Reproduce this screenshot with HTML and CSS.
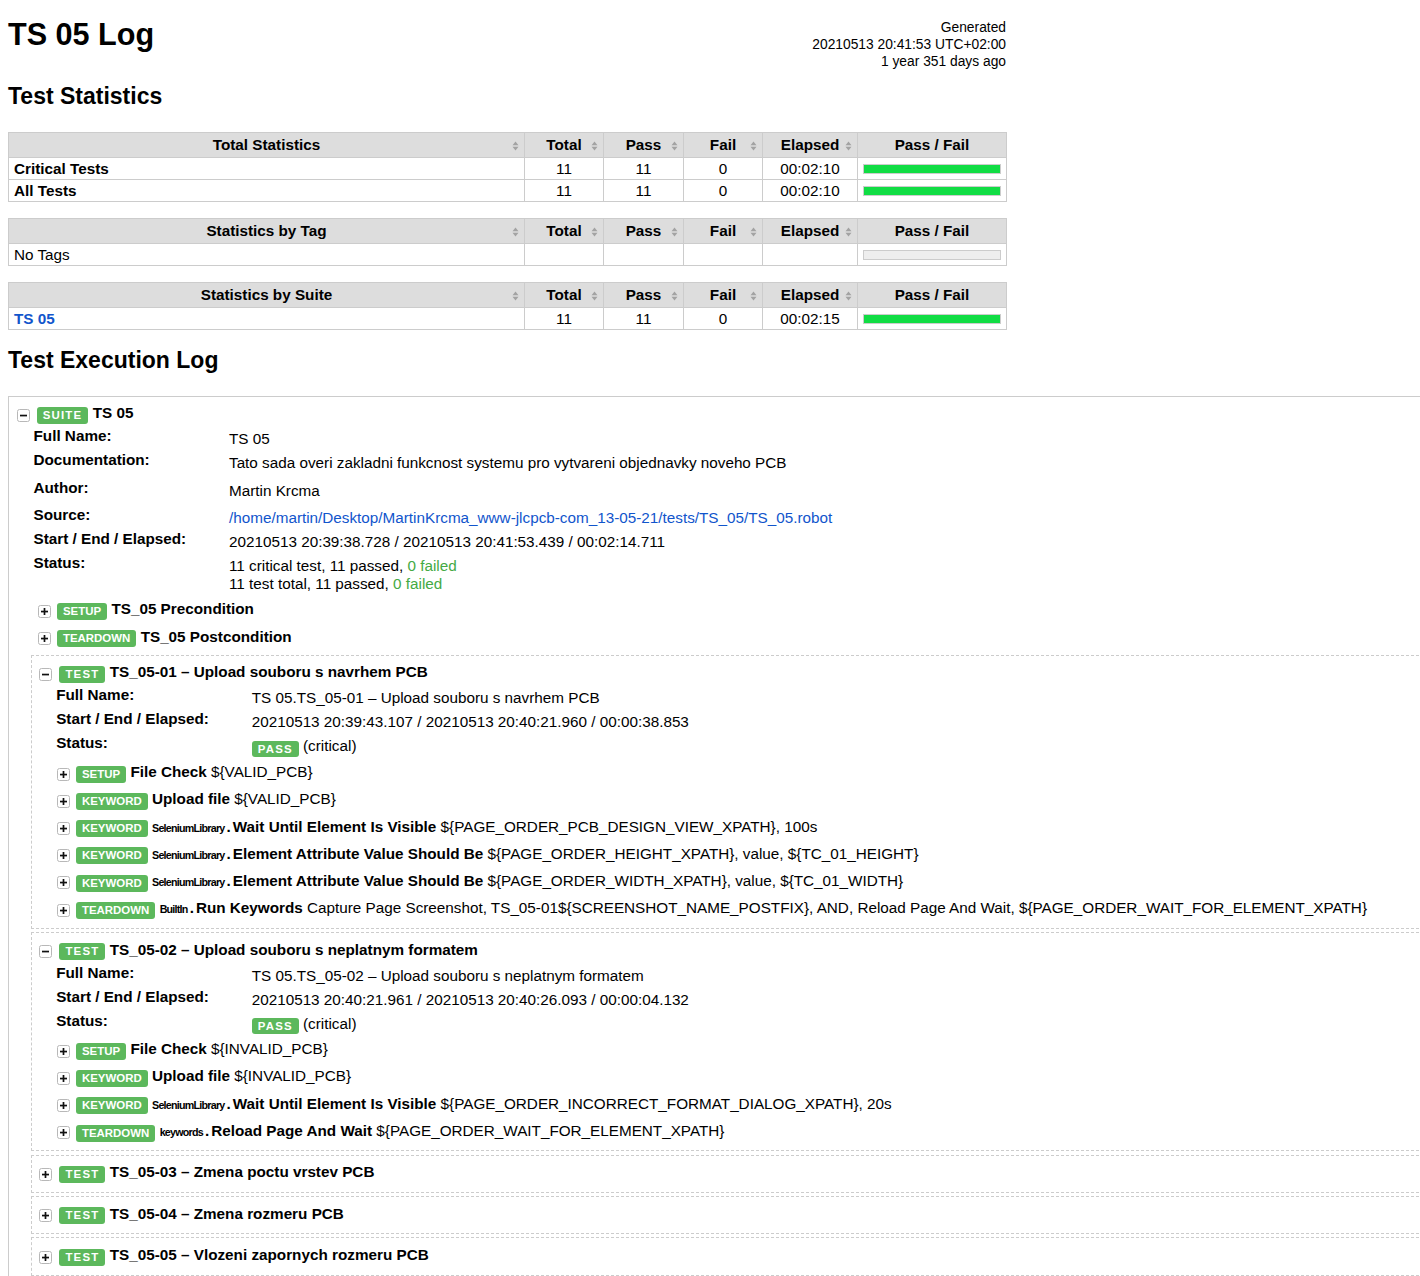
FILE: index.html
```html
<!DOCTYPE html>
<html lang="en">
<head>
<meta charset="utf-8">
<title>TS 05 Log</title>
<link rel="stylesheet" href="styles.css">
</head>
<body>
<header class="top">
  <h1>TS 05 Log</h1>
  <div class="generated">Generated<br>20210513 20:41:53 UTC+02:00<br>1 year 351 days ago</div>
</header>

<h2 class="h-stats">Test Statistics</h2>

<table class="stats">
  <colgroup><col class="c-name"><col class="c-tot"><col class="c-pass"><col class="c-fail"><col class="c-el"><col class="c-bar"></colgroup>
  <thead>
    <tr>
      <th>Total Statistics<span class="sort"><svg width="7" height="10" viewBox="0 0 7 10"><path d="M0.5 4.2L3.5 0.6L6.5 4.2Z M0.5 5.8L3.5 9.4L6.5 5.8Z" fill="#a3a3a3"/></svg></span></th>
      <th>Total<span class="sort"><svg width="7" height="10" viewBox="0 0 7 10"><path d="M0.5 4.2L3.5 0.6L6.5 4.2Z M0.5 5.8L3.5 9.4L6.5 5.8Z" fill="#a3a3a3"/></svg></span></th>
      <th>Pass<span class="sort"><svg width="7" height="10" viewBox="0 0 7 10"><path d="M0.5 4.2L3.5 0.6L6.5 4.2Z M0.5 5.8L3.5 9.4L6.5 5.8Z" fill="#a3a3a3"/></svg></span></th>
      <th>Fail<span class="sort"><svg width="7" height="10" viewBox="0 0 7 10"><path d="M0.5 4.2L3.5 0.6L6.5 4.2Z M0.5 5.8L3.5 9.4L6.5 5.8Z" fill="#a3a3a3"/></svg></span></th>
      <th>Elapsed<span class="sort"><svg width="7" height="10" viewBox="0 0 7 10"><path d="M0.5 4.2L3.5 0.6L6.5 4.2Z M0.5 5.8L3.5 9.4L6.5 5.8Z" fill="#a3a3a3"/></svg></span></th>
      <th>Pass / Fail</th>
    </tr>
  </thead>
  <tbody>
    <tr><td class="nm"><b>Critical Tests</b></td><td>11</td><td>11</td><td>0</td><td>00:02:10</td><td class="barcell"><div class="bar pass"></div></td></tr>
    <tr><td class="nm"><b>All Tests</b></td><td>11</td><td>11</td><td>0</td><td>00:02:10</td><td class="barcell"><div class="bar pass"></div></td></tr>
  </tbody>
</table>

<table class="stats">
  <colgroup><col class="c-name"><col class="c-tot"><col class="c-pass"><col class="c-fail"><col class="c-el"><col class="c-bar"></colgroup>
  <thead>
    <tr>
      <th>Statistics by Tag<span class="sort"><svg width="7" height="10" viewBox="0 0 7 10"><path d="M0.5 4.2L3.5 0.6L6.5 4.2Z M0.5 5.8L3.5 9.4L6.5 5.8Z" fill="#a3a3a3"/></svg></span></th>
      <th>Total<span class="sort"><svg width="7" height="10" viewBox="0 0 7 10"><path d="M0.5 4.2L3.5 0.6L6.5 4.2Z M0.5 5.8L3.5 9.4L6.5 5.8Z" fill="#a3a3a3"/></svg></span></th>
      <th>Pass<span class="sort"><svg width="7" height="10" viewBox="0 0 7 10"><path d="M0.5 4.2L3.5 0.6L6.5 4.2Z M0.5 5.8L3.5 9.4L6.5 5.8Z" fill="#a3a3a3"/></svg></span></th>
      <th>Fail<span class="sort"><svg width="7" height="10" viewBox="0 0 7 10"><path d="M0.5 4.2L3.5 0.6L6.5 4.2Z M0.5 5.8L3.5 9.4L6.5 5.8Z" fill="#a3a3a3"/></svg></span></th>
      <th>Elapsed<span class="sort"><svg width="7" height="10" viewBox="0 0 7 10"><path d="M0.5 4.2L3.5 0.6L6.5 4.2Z M0.5 5.8L3.5 9.4L6.5 5.8Z" fill="#a3a3a3"/></svg></span></th>
      <th>Pass / Fail</th>
    </tr>
  </thead>
  <tbody>
    <tr><td class="nm">No Tags</td><td></td><td></td><td></td><td></td><td class="barcell"><div class="bar empty"></div></td></tr>
  </tbody>
</table>

<table class="stats">
  <colgroup><col class="c-name"><col class="c-tot"><col class="c-pass"><col class="c-fail"><col class="c-el"><col class="c-bar"></colgroup>
  <thead>
    <tr>
      <th>Statistics by Suite<span class="sort"><svg width="7" height="10" viewBox="0 0 7 10"><path d="M0.5 4.2L3.5 0.6L6.5 4.2Z M0.5 5.8L3.5 9.4L6.5 5.8Z" fill="#a3a3a3"/></svg></span></th>
      <th>Total<span class="sort"><svg width="7" height="10" viewBox="0 0 7 10"><path d="M0.5 4.2L3.5 0.6L6.5 4.2Z M0.5 5.8L3.5 9.4L6.5 5.8Z" fill="#a3a3a3"/></svg></span></th>
      <th>Pass<span class="sort"><svg width="7" height="10" viewBox="0 0 7 10"><path d="M0.5 4.2L3.5 0.6L6.5 4.2Z M0.5 5.8L3.5 9.4L6.5 5.8Z" fill="#a3a3a3"/></svg></span></th>
      <th>Fail<span class="sort"><svg width="7" height="10" viewBox="0 0 7 10"><path d="M0.5 4.2L3.5 0.6L6.5 4.2Z M0.5 5.8L3.5 9.4L6.5 5.8Z" fill="#a3a3a3"/></svg></span></th>
      <th>Elapsed<span class="sort"><svg width="7" height="10" viewBox="0 0 7 10"><path d="M0.5 4.2L3.5 0.6L6.5 4.2Z M0.5 5.8L3.5 9.4L6.5 5.8Z" fill="#a3a3a3"/></svg></span></th>
      <th>Pass / Fail</th>
    </tr>
  </thead>
  <tbody>
    <tr><td class="nm"><a class="link strong" href="#s1">TS 05</a></td><td>11</td><td>11</td><td>0</td><td>00:02:15</td><td class="barcell"><div class="bar pass"></div></td></tr>
  </tbody>
</table>

<h2 class="h-log">Test Execution Log</h2>

<div class="suite" id="s1">
  <div class="ehead">
    <span class="tog"><svg width="13" height="13" viewBox="0 0 13 13"><rect x=".5" y=".5" width="12" height="12" rx="2" fill="#fff" stroke="#b8b8b8"/><rect x="3" y="5.7" width="7" height="1.7" fill="#111"/></svg></span><span class="label sp">SUITE</span><span class="ename">TS 05</span>
  </div>
  <table class="meta">
    <tr><th>Full Name:</th><td>TS 05</td></tr>
    <tr class="doc"><th>Documentation:</th><td>Tato sada overi zakladni funkcnost systemu pro vytvareni objednavky noveho PCB</td></tr>
    <tr class="doc"><th>Author:</th><td>Martin Krcma</td></tr>
    <tr><th>Source:</th><td><a class="link" href="#src">/home/martin/Desktop/MartinKrcma_www-jlcpcb-com_13-05-21/tests/TS_05/TS_05.robot</a></td></tr>
    <tr><th>Start / End / Elapsed:</th><td>20210513 20:39:38.728 / 20210513 20:41:53.439 / 00:02:14.711</td></tr>
    <tr class="last"><th>Status:</th><td>11 critical test, 11 passed, <span class="ok">0 failed</span><br>11 test total, 11 passed, <span class="ok">0 failed</span></td></tr>
  </table>

  <div class="children">
    <div class="kw">
      <div class="ehead"><span class="tog"><svg width="13" height="13" viewBox="0 0 13 13"><rect x=".5" y=".5" width="12" height="12" rx="2" fill="#fff" stroke="#b8b8b8"/><rect x="3" y="5.7" width="7" height="1.7" fill="#111"/><rect x="5.65" y="3" width="1.7" height="7" fill="#111"/></svg></span><span class="label">SETUP</span><span class="ename">TS_05 Precondition</span></div>
    </div>
    <div class="kw">
      <div class="ehead"><span class="tog"><svg width="13" height="13" viewBox="0 0 13 13"><rect x=".5" y=".5" width="12" height="12" rx="2" fill="#fff" stroke="#b8b8b8"/><rect x="3" y="5.7" width="7" height="1.7" fill="#111"/><rect x="5.65" y="3" width="1.7" height="7" fill="#111"/></svg></span><span class="label">TEARDOWN</span><span class="ename">TS_05 Postcondition</span></div>
    </div>

    <div class="test">
      <div class="ehead"><span class="tog"><svg width="13" height="13" viewBox="0 0 13 13"><rect x=".5" y=".5" width="12" height="12" rx="2" fill="#fff" stroke="#b8b8b8"/><rect x="3" y="5.7" width="7" height="1.7" fill="#111"/></svg></span><span class="label sp">TEST</span><span class="ename">TS_05-01 – Upload souboru s navrhem PCB</span></div>
      <table class="meta">
        <tr><th>Full Name:</th><td>TS 05.TS_05-01 – Upload souboru s navrhem PCB</td></tr>
        <tr><th>Start / End / Elapsed:</th><td>20210513 20:39:43.107 / 20210513 20:40:21.960 / 00:00:38.853</td></tr>
        <tr class="last"><th>Status:</th><td><span class="label sp inl">PASS</span> (critical)</td></tr>
      </table>
      <div class="tchildren">
        <div class="kw"><div class="ehead"><span class="tog"><svg width="13" height="13" viewBox="0 0 13 13"><rect x=".5" y=".5" width="12" height="12" rx="2" fill="#fff" stroke="#b8b8b8"/><rect x="3" y="5.7" width="7" height="1.7" fill="#111"/><rect x="5.65" y="3" width="1.7" height="7" fill="#111"/></svg></span><span class="label">SETUP</span><span class="ename">File Check <span class="arg">${VALID_PCB}</span></span></div></div>
        <div class="kw"><div class="ehead"><span class="tog"><svg width="13" height="13" viewBox="0 0 13 13"><rect x=".5" y=".5" width="12" height="12" rx="2" fill="#fff" stroke="#b8b8b8"/><rect x="3" y="5.7" width="7" height="1.7" fill="#111"/><rect x="5.65" y="3" width="1.7" height="7" fill="#111"/></svg></span><span class="label">KEYWORD</span><span class="ename">Upload file <span class="arg">${VALID_PCB}</span></span></div></div>
        <div class="kw"><div class="ehead"><span class="tog"><svg width="13" height="13" viewBox="0 0 13 13"><rect x=".5" y=".5" width="12" height="12" rx="2" fill="#fff" stroke="#b8b8b8"/><rect x="3" y="5.7" width="7" height="1.7" fill="#111"/><rect x="5.65" y="3" width="1.7" height="7" fill="#111"/></svg></span><span class="label">KEYWORD</span><span class="ename"><span class="parent">SeleniumLibrary</span><span class="dot">.</span>Wait Until Element Is Visible <span class="arg">${PAGE_ORDER_PCB_DESIGN_VIEW_XPATH}, 100s</span></span></div></div>
        <div class="kw"><div class="ehead"><span class="tog"><svg width="13" height="13" viewBox="0 0 13 13"><rect x=".5" y=".5" width="12" height="12" rx="2" fill="#fff" stroke="#b8b8b8"/><rect x="3" y="5.7" width="7" height="1.7" fill="#111"/><rect x="5.65" y="3" width="1.7" height="7" fill="#111"/></svg></span><span class="label">KEYWORD</span><span class="ename"><span class="parent">SeleniumLibrary</span><span class="dot">.</span>Element Attribute Value Should Be <span class="arg">${PAGE_ORDER_HEIGHT_XPATH}, value, ${TC_01_HEIGHT}</span></span></div></div>
        <div class="kw"><div class="ehead"><span class="tog"><svg width="13" height="13" viewBox="0 0 13 13"><rect x=".5" y=".5" width="12" height="12" rx="2" fill="#fff" stroke="#b8b8b8"/><rect x="3" y="5.7" width="7" height="1.7" fill="#111"/><rect x="5.65" y="3" width="1.7" height="7" fill="#111"/></svg></span><span class="label">KEYWORD</span><span class="ename"><span class="parent">SeleniumLibrary</span><span class="dot">.</span>Element Attribute Value Should Be <span class="arg">${PAGE_ORDER_WIDTH_XPATH}, value, ${TC_01_WIDTH}</span></span></div></div>
        <div class="kw"><div class="ehead"><span class="tog"><svg width="13" height="13" viewBox="0 0 13 13"><rect x=".5" y=".5" width="12" height="12" rx="2" fill="#fff" stroke="#b8b8b8"/><rect x="3" y="5.7" width="7" height="1.7" fill="#111"/><rect x="5.65" y="3" width="1.7" height="7" fill="#111"/></svg></span><span class="label">TEARDOWN</span><span class="ename"><span class="parent">BuiltIn</span><span class="dot">.</span>Run Keywords <span class="arg">Capture Page Screenshot, TS_05-01${SCREENSHOT_NAME_POSTFIX}, AND, Reload Page And Wait, ${PAGE_ORDER_WAIT_FOR_ELEMENT_XPATH}</span></span></div></div>
      </div>
    </div>

    <div class="test">
      <div class="ehead"><span class="tog"><svg width="13" height="13" viewBox="0 0 13 13"><rect x=".5" y=".5" width="12" height="12" rx="2" fill="#fff" stroke="#b8b8b8"/><rect x="3" y="5.7" width="7" height="1.7" fill="#111"/></svg></span><span class="label sp">TEST</span><span class="ename">TS_05-02 – Upload souboru s neplatnym formatem</span></div>
      <table class="meta">
        <tr><th>Full Name:</th><td>TS 05.TS_05-02 – Upload souboru s neplatnym formatem</td></tr>
        <tr><th>Start / End / Elapsed:</th><td>20210513 20:40:21.961 / 20210513 20:40:26.093 / 00:00:04.132</td></tr>
        <tr class="last"><th>Status:</th><td><span class="label sp inl">PASS</span> (critical)</td></tr>
      </table>
      <div class="tchildren">
        <div class="kw"><div class="ehead"><span class="tog"><svg width="13" height="13" viewBox="0 0 13 13"><rect x=".5" y=".5" width="12" height="12" rx="2" fill="#fff" stroke="#b8b8b8"/><rect x="3" y="5.7" width="7" height="1.7" fill="#111"/><rect x="5.65" y="3" width="1.7" height="7" fill="#111"/></svg></span><span class="label">SETUP</span><span class="ename">File Check <span class="arg">${INVALID_PCB}</span></span></div></div>
        <div class="kw"><div class="ehead"><span class="tog"><svg width="13" height="13" viewBox="0 0 13 13"><rect x=".5" y=".5" width="12" height="12" rx="2" fill="#fff" stroke="#b8b8b8"/><rect x="3" y="5.7" width="7" height="1.7" fill="#111"/><rect x="5.65" y="3" width="1.7" height="7" fill="#111"/></svg></span><span class="label">KEYWORD</span><span class="ename">Upload file <span class="arg">${INVALID_PCB}</span></span></div></div>
        <div class="kw"><div class="ehead"><span class="tog"><svg width="13" height="13" viewBox="0 0 13 13"><rect x=".5" y=".5" width="12" height="12" rx="2" fill="#fff" stroke="#b8b8b8"/><rect x="3" y="5.7" width="7" height="1.7" fill="#111"/><rect x="5.65" y="3" width="1.7" height="7" fill="#111"/></svg></span><span class="label">KEYWORD</span><span class="ename"><span class="parent">SeleniumLibrary</span><span class="dot">.</span>Wait Until Element Is Visible <span class="arg">${PAGE_ORDER_INCORRECT_FORMAT_DIALOG_XPATH}, 20s</span></span></div></div>
        <div class="kw"><div class="ehead"><span class="tog"><svg width="13" height="13" viewBox="0 0 13 13"><rect x=".5" y=".5" width="12" height="12" rx="2" fill="#fff" stroke="#b8b8b8"/><rect x="3" y="5.7" width="7" height="1.7" fill="#111"/><rect x="5.65" y="3" width="1.7" height="7" fill="#111"/></svg></span><span class="label">TEARDOWN</span><span class="ename"><span class="parent">keywords</span><span class="dot">.</span>Reload Page And Wait <span class="arg">${PAGE_ORDER_WAIT_FOR_ELEMENT_XPATH}</span></span></div></div>
      </div>
    </div>

    <div class="test">
      <div class="ehead"><span class="tog"><svg width="13" height="13" viewBox="0 0 13 13"><rect x=".5" y=".5" width="12" height="12" rx="2" fill="#fff" stroke="#b8b8b8"/><rect x="3" y="5.7" width="7" height="1.7" fill="#111"/><rect x="5.65" y="3" width="1.7" height="7" fill="#111"/></svg></span><span class="label sp">TEST</span><span class="ename">TS_05-03 – Zmena poctu vrstev PCB</span></div>
    </div>
    <div class="test">
      <div class="ehead"><span class="tog"><svg width="13" height="13" viewBox="0 0 13 13"><rect x=".5" y=".5" width="12" height="12" rx="2" fill="#fff" stroke="#b8b8b8"/><rect x="3" y="5.7" width="7" height="1.7" fill="#111"/><rect x="5.65" y="3" width="1.7" height="7" fill="#111"/></svg></span><span class="label sp">TEST</span><span class="ename">TS_05-04 – Zmena rozmeru PCB</span></div>
    </div>
    <div class="test">
      <div class="ehead"><span class="tog"><svg width="13" height="13" viewBox="0 0 13 13"><rect x=".5" y=".5" width="12" height="12" rx="2" fill="#fff" stroke="#b8b8b8"/><rect x="3" y="5.7" width="7" height="1.7" fill="#111"/><rect x="5.65" y="3" width="1.7" height="7" fill="#111"/></svg></span><span class="label sp">TEST</span><span class="ename">TS_05-05 – Vlozeni zapornych rozmeru PCB</span></div>
    </div>
  </div>
</div>
</body>
</html>
```

FILE: styles.css
```css
html {
  overflow: hidden;
}

body {
  margin: 0;
  padding: 17.4px 8px 0 8px;
  font-family: "Liberation Sans", Arial, Helvetica, sans-serif;
  font-size: 15.27px;
  color: #000;
  background: #fff;
}

/* header */
.top {
  width: 998px;
  display: flex;
  justify-content: space-between;
  align-items: flex-start;
}

.top h1 {
  margin: 0;
  font-size: 30.6px;
  line-height: 35.3px;
  font-weight: bold;
}

.generated {
  margin-top: 2px;
  text-align: right;
  font-size: 13.8px;
  line-height: 17px;
}

h2 {
  margin: 0;
  font-size: 23px;
  line-height: 26.5px;
  font-weight: bold;
}

.h-stats {
  margin-top: 12.2px;
  margin-bottom: 23.4px;
}

.h-log {
  margin-top: 16.8px;
}

/* statistics tables */
.stats {
  width: 998px;
  table-layout: fixed;
  border-collapse: collapse;
  margin-bottom: 16px;
}

.stats .c-name { width: 516px; }
.stats .c-tot { width: 79px; }
.stats .c-pass { width: 80px; }
.stats .c-fail { width: 79px; }
.stats .c-el { width: 95px; }
.stats .c-bar { width: 149px; }

.stats th,
.stats td {
  border: 1px solid #ccc;
  padding: 0 5px;
  white-space: nowrap;
}

.stats th {
  position: relative;
  background: #ddd;
  height: 24px;
  font-weight: bold;
  text-align: center;
  line-height: 18px;
}

.stats td {
  height: 21px;
  text-align: center;
  line-height: 18px;
}

.stats td.nm {
  text-align: left;
}

.sort {
  position: absolute;
  right: 5.5px;
  top: 7.5px;
  width: 7px;
  height: 10px;
  line-height: 0;
}

.barcell {
  padding: 0 4px 0 5px;
}

.bar {
  height: 8px;
  border: 1px solid #ccc;
}

.bar.pass {
  background: #11dd44;
}

.bar.empty {
  background: #eee;
}

.link {
  color: #1155cc;
  text-decoration: none;
}

.link.strong {
  font-weight: bold;
}

/* execution log */
.suite {
  margin-top: 22px;
  width: 1450px;
  box-sizing: border-box;
  border: 1px solid #ccc;
  padding: 4.6px 3px;
}

.ehead {
  display: flex;
  align-items: flex-start;
  height: 27.2px;
  box-sizing: border-box;
  padding: 3px 0 0 4.7px;
  white-space: nowrap;
}

.tog {
  flex: none;
  width: 13px;
  height: 13px;
  margin-top: 4.6px;
  margin-right: 7px;
  line-height: 0;
}

.label {
  flex: none;
  margin-top: 2.8px;
  height: 17px;
  line-height: 17px;
  padding: 0 6px;
  border-radius: 3px;
  background: #5cb85c;
  color: #fff;
  font-size: 11.45px;
  font-weight: bold;
  letter-spacing: 0;
}

.label.sp {
  letter-spacing: 1.2px;
}

.label.inl {
  display: inline;
  height: auto;
  margin: 0;
  line-height: 1;
  padding: 2.2px 6px;
  vertical-align: -1.7px;
}

.ename {
  margin-left: 4.3px;
  line-height: 18px;
  font-weight: bold;
}

.arg {
  font-weight: normal;
}

.parent {
  font-size: 10.7px;
  letter-spacing: -0.75px;
  margin-right: 2px;
}

.dot {
  margin-right: 2px;
}

.meta {
  border-collapse: collapse;
  margin: -1.2px 0 0 21.5px;
}

.meta th {
  width: 195.5px;
  padding: 0;
  text-align: left;
  vertical-align: top;
  line-height: 18px;
  font-weight: bold;
  white-space: nowrap;
}

.meta td {
  padding: 3px 0 3px 0;
  vertical-align: top;
  line-height: 18px;
  white-space: nowrap;
}

.meta tr.doc td {
  padding-bottom: 6.3px;
}

.meta tr.last td {
  padding-bottom: 4.5px;
}

.ok {
  color: #44aa44;
}

.children {
  margin-left: 18.7px;
}

.kw .ehead {
  padding-left: 7.6px;
}

.kw .tog {
  margin-right: 5.7px;
}

.test {
  margin: 3.07px 0;
  border: 1px dashed #ccc;
  padding: 4.6px 3px;
}

.tchildren {
  margin-left: 15px;
}
```
